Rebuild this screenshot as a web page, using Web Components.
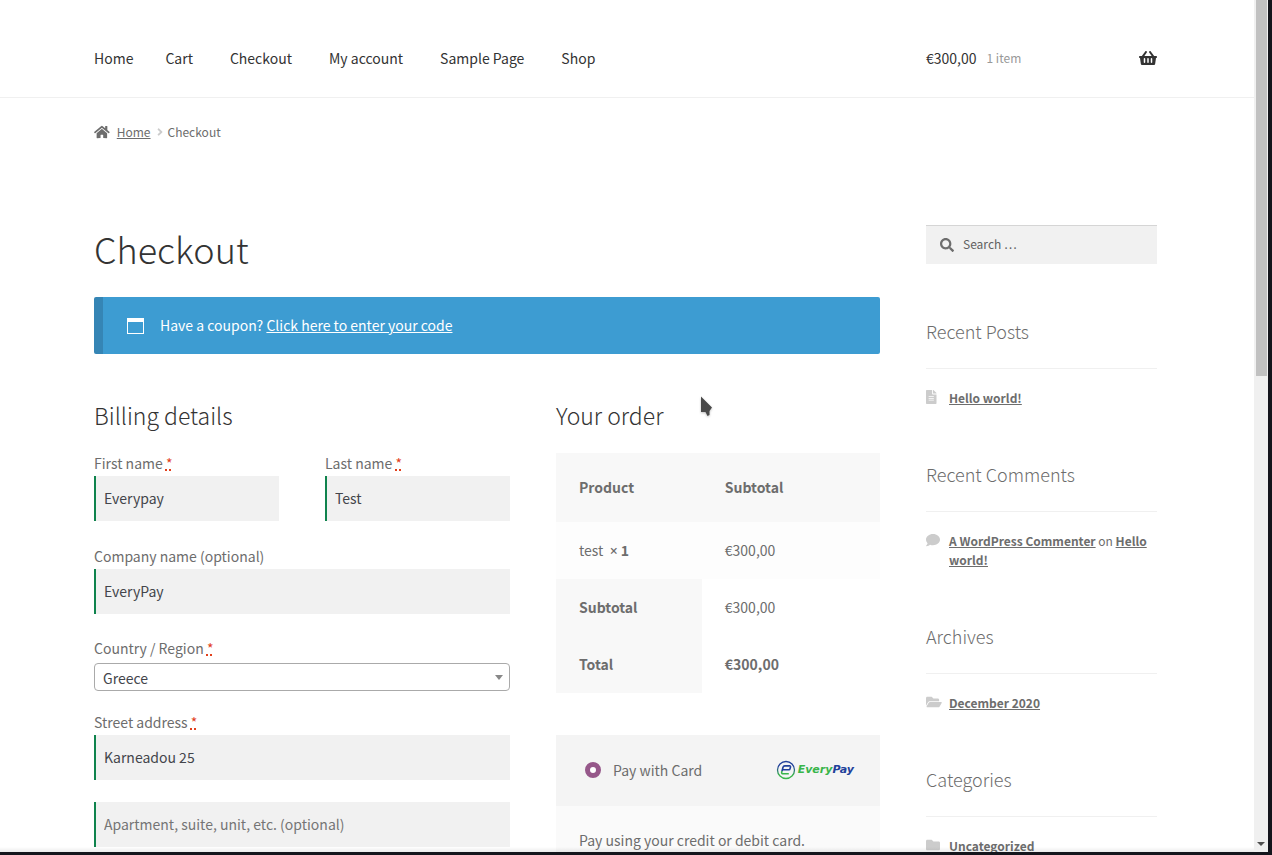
<!DOCTYPE html>
<html lang="en">
<head>
<meta charset="utf-8">
<title>Checkout</title>
<style>
    :root {
        --font: "Noto Sans CJK JP", "Noto Sans", sans-serif;
        --text: #6d6d6d;
        --heading: #333333;
        --line: #f0f0f0;
        --field: #f1f1f1;
        --size-1: 12px;
        --size-2: 14px;
        --size-3: 18px;
        --size-4: 23px;
        --size-5: 36px;
    }

    body {
        margin: 0;
        background: #ffffff;
        color: var(--text);
        font-family: var(--font);
        font-size: var(--size-2);
        line-height: 24px;
    }
</style>
</head>
<body>
<checkout-page></checkout-page>

<script>
const ICONS = {
    home: ['0 0 576 512', 'M280.37 148.26L96 300.11V464a16 16 0 0 0 16 16l112.06-.29a16 16 0 0 0 15.92-16V368a16 16 0 0 1 16-16h64a16 16 0 0 1 16 16v95.64a16 16 0 0 0 16 16.05L464 480a16 16 0 0 0 16-16V300L295.67 148.26a12.19 12.19 0 0 0-15.3 0zM571.6 251.47L488 182.56V44.05a12 12 0 0 0-12-12h-56a12 12 0 0 0-12 12v72.61L318.47 43a48 48 0 0 0-61 0L4.34 251.47a12 12 0 0 0-1.6 16.9l25.5 31A12 12 0 0 0 45.15 301l235.22-193.74a12.19 12.19 0 0 1 15.3 0L530.9 301a12 12 0 0 0 16.9-1.6l25.5-31a12 12 0 0 0-1.7-16.93z'],
    angle: ['0 0 256 512', 'M224.3 273l-136 136c-9.4 9.4-24.6 9.4-33.9 0l-22.6-22.6c-9.4-9.4-9.4-24.6 0-33.9l96.4-96.4-96.4-96.4c-9.4-9.4-9.4-24.6 0-33.9L54.3 103c9.4-9.4 24.6-9.4 33.9 0l136 136c9.5 9.4 9.5 24.6.1 34z'],
    search: ['0 0 512 512', 'M505 442.7L405.3 343c-4.5-4.5-10.6-7-17-7H372c27.6-35.3 44-79.7 44-128C416 93.1 322.9 0 208 0S0 93.1 0 208s93.1 208 208 208c48.3 0 92.7-16.4 128-44v16.3c0 6.4 2.5 12.5 7 17l99.7 99.7c9.4 9.4 24.6 9.4 33.9 0l28.3-28.3c9.4-9.4 9.4-24.6.1-34zM208 336c-70.7 0-128-57.2-128-128 0-70.7 57.2-128 128-128 70.7 0 128 57.2 128 128 0 70.7-57.2 128-128 128z'],
    basket: ['0 0 576 512', 'M576 216v16c0 13.255-10.745 24-24 24h-8l-26.113 182.788C514.509 462.435 494.257 480 470.37 480H105.63c-23.887 0-44.139-17.565-47.518-41.212L32 256h-8c-13.255 0-24-10.745-24-24v-16c0-13.255 10.745-24 24-24h67.341l106.78-146.821c10.395-14.292 30.407-17.453 44.701-7.058 14.293 10.395 17.453 30.408 7.058 44.701L170.477 192h235.046L326.12 82.821c-10.395-14.292-7.234-34.306 7.059-44.701 14.291-10.395 34.306-7.235 44.701 7.058L484.659 192H552c13.255 0 24 10.745 24 24zM312 392V280c0-13.255-10.745-24-24-24s-24 10.745-24 24v112c0 13.255 10.745 24 24 24s24-10.745 24-24zm112 0V280c0-13.255-10.745-24-24-24s-24 10.745-24 24v112c0 13.255 10.745 24 24 24s24-10.745 24-24zm-224 0V280c0-13.255-10.745-24-24-24s-24 10.745-24 24v112c0 13.255 10.745 24 24 24s24-10.745 24-24z'],
    file: ['0 0 384 512', 'M224 136V0H24C10.7 0 0 10.7 0 24v464c0 13.3 10.7 24 24 24h336c13.3 0 24-10.7 24-24V160H248c-13.2 0-24-10.8-24-24zm64 236c0 6.6-5.4 12-12 12H108c-6.6 0-12-5.4-12-12v-8c0-6.6 5.4-12 12-12h168c6.6 0 12 5.4 12 12v8zm0-64c0 6.6-5.4 12-12 12H108c-6.6 0-12-5.4-12-12v-8c0-6.6 5.4-12 12-12h168c6.6 0 12 5.4 12 12v8zm0-72v8c0 6.6-5.4 12-12 12H108c-6.6 0-12-5.4-12-12v-8c0-6.6 5.4-12 12-12h168c6.6 0 12 5.4 12 12zm96-114.1v6.1H256V0h6.1c6.4 0 12.5 2.5 17 7l97.9 98c4.5 4.5 7 10.6 7 16.9z'],
    comment: ['0 0 512 512', 'M256 32C114.6 32 0 125.1 0 240c0 49.6 21.4 95 57 130.7C44.5 421.1 2.7 466 2.2 466.5c-2.2 2.3-2.8 5.7-1.5 8.7S4.8 480 8 480c66.3 0 116-31.8 140.6-51.4 32.7 12.3 69 19.4 107.4 19.4 141.4 0 256-93.1 256-208S397.4 32 256 32z'],
    folder: ['0 0 512 512', 'M464 128H272l-64-64H48C21.49 64 0 85.49 0 112v288c0 26.51 21.49 48 48 48h416c26.51 0 48-21.49 48-48V176c0-26.51-21.49-48-48-48z'],
    open: ['0 0 576 512', 'M572.694 292.093L500.27 416.248A63.997 63.997 0 0 1 444.989 448H45.025c-18.523 0-30.064-20.093-20.731-36.093l72.424-124.155A64 64 0 0 1 152 256h399.964c18.523 0 30.064 20.093 20.73 36.093zM152 224h328v-48c0-26.51-21.49-48-48-48H272l-64-64H48C21.49 64 0 85.49 0 112v278.046l69.077-118.418C86.214 242.25 117.989 224 152 224z'],
    window: ['0 0 17 16', 'M0 0H17V16H0ZM1 4V15H16V4Z']
};

class BaseElement extends HTMLElement {
    constructor() {
        super();
        this.attachShadow({mode: 'open'});
    }

    connectedCallback() {
        this.shadowRoot.innerHTML = `<style>*, *::before, *::after { box-sizing: border-box; }${this.css()}</style>${this.html()}`;
    }
}

class ShopIcon extends BaseElement {
    html() {
        const [box, path] = ICONS[this.getAttribute('name')];
        return `<svg viewBox="${box}" aria-hidden="true"><path fill-rule="evenodd" d="${path}"/></svg>`;
    }

    css() {
        return `
            :host { display: inline-flex; height: 14px; }
            svg { display: block; height: 100%; fill: currentColor; }
        `;
    }
}

class SiteHeader extends BaseElement {
    html() {
        return `
            <nav>
                <a href="#home">Home</a>
                <a href="#cart">Cart</a>
                <a href="#checkout">Checkout</a>
                <a href="#account">My account</a>
                <a href="#sample">Sample Page</a>
                <a href="#shop">Shop</a>
            </nav>
            <a class="cart" href="#cart">
                <span>€300,00</span>
                <small>1 item</small>
                <shop-icon name="basket"></shop-icon>
            </a>
        `;
    }

    css() {
        return `
            :host {
                display: grid;
                grid-template-columns: minmax(0, 1fr) 231px;
                column-gap: 46px;
                align-items: center;
                padding: 46px 97px 27px 94px;
                border-bottom: 1px solid var(--line);
            }
            nav { display: flex; gap: 37px; }
            a { color: var(--heading); text-decoration: none; white-space: nowrap; }
            nav > a:first-child { margin-right: -5px; }
            .cart { display: flex; align-items: center; gap: 10px; }
            small { color: #999999; font-size: var(--size-1); }
            shop-icon { height: 16px; margin-left: auto; }
        `;
    }
}

class BreadCrumb extends BaseElement {
    html() {
        return `
            <shop-icon name="home"></shop-icon>
            <a href="#home">Home</a>
            <shop-icon class="sep" name="angle"></shop-icon>
            <span>Checkout</span>
        `;
    }

    css() {
        return `
            :host { display: flex; align-items: center; font-size: var(--size-1); }
            a { color: inherit; margin: 0 6px 0 7px; text-underline-offset: 1px; }
            .sep { color: #cccccc; height: 12px; margin-right: 5px; }
        `;
    }
}

class CouponNotice extends BaseElement {
    html() {
        return `
            <shop-icon name="window"></shop-icon>
            <span><slot></slot> <a href="#coupon">Click here to enter your code</a></span>
        `;
    }

    css() {
        return `
            :host {
                display: flex;
                align-items: center;
                gap: 16px;
                padding: 16px 24px;
                border-left: 9px solid #3585b5;
                border-radius: 2px;
                background: #3d9cd2;
                color: #ffffff;
                line-height: 25px;
            }
            shop-icon { height: 16px; }
            a { color: inherit; text-underline-offset: 1px; }
        `;
    }
}

class FormField extends BaseElement {
    html() {
        const label = this.getAttribute('label');
        const value = this.getAttribute('value') || '';
        const hint = this.getAttribute('placeholder') || '';
        const star = this.hasAttribute('required') ? ' <abbr title="required">*</abbr>' : '';
        const head = label ? `<label for="field">${label}${star}</label>` : '';
        if (this.hasAttribute('select')) {
            return `${head}<span class="pick"><select id="field"><option>${value}</option></select></span>`;
        }
        return `${head}<input id="field" type="text" value="${value}" placeholder="${hint}"${label ? '' : ` aria-label="${hint}"`}>`;
    }

    css() {
        return `
            :host { display: block; min-width: 0; }
            label { display: block; line-height: 22px; padding-bottom: 2px; }
            abbr {
                color: #e2401c;
                text-decoration: underline dotted;
                text-decoration-thickness: 2px;
                text-underline-offset: 0;
            }
            input, select {
                display: block;
                width: 100%;
                margin: 0;
                font: inherit;
                color: #43454b;
            }
            input {
                height: 45px;
                padding: 0 8px 2px;
                border: 0;
                border-left: 2px solid #0f834d;
                border-radius: 0;
                background: var(--field);
            }
            input::placeholder { color: #757575; opacity: 1; }
            .pick { display: block; position: relative; margin-top: 2px; }
            select {
                height: 28px;
                padding: 2px 24px 0 8px;
                border: 1px solid #aaaaaa;
                border-radius: 4px;
                background: #ffffff;
                appearance: none;
            }
            .pick::after {
                content: '';
                position: absolute;
                top: 12px;
                right: 7px;
                border: 4px solid transparent;
                border-top: 5px solid #888888;
                border-bottom: 0;
            }
        `;
    }
}

class BillingForm extends BaseElement {
    html() {
        return `
            <h3>Billing details</h3>
            <form>
                <div class="names">
                    <form-field label="First name" value="Everypay" required></form-field>
                    <form-field label="Last name" value="Test" required></form-field>
                </div>
                <form-field label="Company name (optional)" value="EveryPay"></form-field>
                <form-field label="Country / Region" value="Greece" select required></form-field>
                <div class="street">
                    <form-field label="Street address" value="Karneadou 25" required></form-field>
                    <form-field placeholder="Apartment, suite, unit, etc. (optional)"></form-field>
                </div>
            </form>
        `;
    }

    css() {
        return `
            :host { display: block; min-width: 0; }
            h3 {
                margin: 0 0 22px;
                color: var(--heading);
                font-size: var(--size-4);
                font-weight: 300;
                line-height: 30px;
            }
            form { display: flex; flex-direction: column; gap: 23px; }
            .names { display: grid; grid-template-columns: 1fr 1fr; gap: 46px; padding-bottom: 1px; }
            .street { display: flex; flex-direction: column; gap: 22px; margin-top: -3px; }
        `;
    }
}

class OrderTable extends BaseElement {
    html() {
        return `
            <h3>Your order</h3>
            <table>
                <thead>
                    <tr><th>Product</th><th>Subtotal</th></tr>
                </thead>
                <tbody>
                    <tr><td>test&nbsp; <strong><span class="times">×</span> 1</strong></td><td>€300,00</td></tr>
                </tbody>
                <tfoot>
                    <tr><th>Subtotal</th><td>€300,00</td></tr>
                    <tr><th>Total</th><td><strong>€300,00</strong></td></tr>
                </tfoot>
            </table>
        `;
    }

    css() {
        return `
            :host { display: block; }
            h3 {
                margin: 0 0 23px;
                color: var(--heading);
                font-size: var(--size-4);
                font-weight: 300;
                line-height: 30px;
            }
            table { width: 100%; border-collapse: collapse; table-layout: fixed; }
            th, td { padding: 16px 23px 17px; text-align: left; vertical-align: top; }
            th:first-child { width: 45%; }
            th, strong { font-weight: 600; }
            thead th { padding: 22px 23px 23px; background: #f8f8f8; }
            tbody td { background: #fdfdfd; }
            tfoot th { background: #f8f8f8; }
            .times { font-family: "Open Sans", sans-serif; line-height: 1; }
        `;
    }
}

class EverypayLogo extends BaseElement {
    html() {
        return `
            <svg viewBox="0 0 20 20" aria-hidden="true">
                <defs>
                    <linearGradient id="ring" x1="0" y1="0" x2="0" y2="1">
                        <stop offset="0.3" stop-color="#21409a"/>
                        <stop offset="0.8" stop-color="#39b54a"/>
                    </linearGradient>
                </defs>
                <circle cx="10" cy="10" r="8.5" fill="none" stroke="url(#ring)" stroke-width="1.3"/>
                <path d="M6.2 9.8H13Q13.8 9.8 14 8.9L14.5 7Q14.7 5.9 13.6 5.9H8.8Q7.4 5.9 7 7.2L6 11.2" fill="none" stroke="#21409a" stroke-width="1.6"/>
                <path d="M5.9 11.2L5.7 12.2Q5.5 13.8 7 13.8H12.8" fill="none" stroke="#39b54a" stroke-width="1.6"/>
            </svg>
            <span>Every<b>Pay</b></span>
        `;
    }

    css() {
        return `
            :host { display: inline-flex; align-items: center; gap: 2px; }
            svg { width: 20px; height: 20px; }
            span {
                color: #39b54a;
                font: italic 700 11px/20px "DejaVu Sans", sans-serif;
            }
            b { color: #21409a; font-weight: inherit; }
        `;
    }
}

class PaymentBox extends BaseElement {
    html() {
        return `
            <div class="method">
                <input type="radio" id="card" name="payment" checked>
                <label for="card">Pay with Card</label>
                <everypay-logo></everypay-logo>
            </div>
            <p>Pay using your credit or debit card.</p>
        `;
    }

    css() {
        return `
            :host { display: block; background: #fafafa; }
            .method {
                display: flex;
                align-items: center;
                padding: 23px 26px 24px 29px;
                background: #f4f4f4;
            }
            input {
                width: 16px;
                height: 16px;
                margin: 0 12px 0 0;
                border: 5px solid #96588a;
                border-radius: 50%;
                background: #ffffff;
                appearance: none;
            }
            everypay-logo { margin-left: auto; }
            p { margin: 0; padding: 22px 23px 60px; }
        `;
    }
}

class SearchBox extends BaseElement {
    html() {
        return `
            <shop-icon name="search"></shop-icon>
            <input type="search" placeholder="Search …" aria-label="Search for:">
        `;
    }

    css() {
        return `
            :host {
                display: flex;
                align-items: center;
                box-sizing: border-box;
                height: 39px;
                padding-left: 14px;
                gap: 9px;
                border-top: 1px solid #d5d5d5;
                background: var(--field);
            }
            input {
                flex: 1;
                min-width: 0;
                padding: 0 0 2px;
                border: 0;
                background: none;
                color: inherit;
                font: inherit;
                font-size: var(--size-1);
            }
            input::placeholder { color: #616161; opacity: 1; }
        `;
    }
}

class SideWidget extends BaseElement {
    html() {
        return `
            <h2>${this.getAttribute('heading')}</h2>
            <div class="item">
                <shop-icon name="${this.getAttribute('icon')}"></shop-icon>
                <span><slot></slot></span>
            </div>
        `;
    }

    css() {
        return `
            :host { display: block; }
            h2 {
                margin: 0 0 19px;
                padding-bottom: 25px;
                border-bottom: 1px solid var(--line);
                font-size: var(--size-3);
                font-weight: 300;
                line-height: 24px;
            }
            .item {
                display: grid;
                grid-template-columns: 23px 1fr;
                font-size: var(--size-1);
                line-height: 19px;
            }
            shop-icon { color: #cccccc; margin-top: 2px; }
            ::slotted(a) { color: inherit; font-weight: 600; text-underline-offset: 1px; }
        `;
    }
}

class ScrollBar extends BaseElement {
    html() {
        return `<div class="thumb"></div><div class="arrow"></div>`;
    }

    css() {
        return `
            :host {
                display: flex;
                flex-direction: column;
                justify-content: space-between;
                align-items: center;
                padding-bottom: 6px;
                background: #f0f0f0;
            }
            .thumb { width: 11px; height: 44.4%; background: #c1c1c1; }
            .arrow { border: 4px solid transparent; border-top-color: #505050; border-bottom: 0; }
        `;
    }
}

class CheckoutPage extends BaseElement {
    html() {
        return `
            <div class="view">
                <site-header></site-header>
                <bread-crumb></bread-crumb>
                <div class="content">
                    <main>
                        <h1>Checkout</h1>
                        <coupon-notice>Have a coupon?</coupon-notice>
                        <div class="columns">
                            <billing-form></billing-form>
                            <div class="review">
                                <order-table></order-table>
                                <payment-box></payment-box>
                            </div>
                        </div>
                    </main>
                    <aside>
                        <search-box></search-box>
                        <side-widget heading="Recent Posts" icon="file"><a href="#post">Hello world!</a></side-widget>
                        <side-widget heading="Recent Comments" icon="comment"><a href="#author">A WordPress Commenter</a> on <a href="#post">Hello world!</a></side-widget>
                        <side-widget heading="Archives" icon="open"><a href="#archive">December 2020</a></side-widget>
                        <side-widget heading="Categories" icon="folder"><a href="#category">Uncategorized</a></side-widget>
                    </aside>
                </div>
            </div>
            <scroll-bar></scroll-bar>
            <svg class="pointer" viewBox="0 0 14 22" aria-hidden="true"><path d="M1 0.5V16H5.5L7.5 20L9.5 19V15L12 11.5Z"/></svg>
        `;
    }

    css() {
        return `
            :host {
                display: grid;
                grid-template-columns: minmax(0, 1fr) 14px;
                height: 100vh;
                box-sizing: border-box;
                border: solid #14151c;
                border-width: 0 4px 3px 0;
                overflow: hidden;
            }
            .view { position: relative; overflow: hidden; }
            .view::after {
                content: '';
                position: absolute;
                left: 0;
                right: 0;
                bottom: 0;
                height: 5px;
                background: linear-gradient(rgba(0, 0, 0, 0), rgba(0, 0, 0, 0.08));
            }
            bread-crumb { padding: 22px 97px 69px 94px; }
            .content {
                display: grid;
                grid-template-columns: minmax(0, 1fr) 231px;
                column-gap: 46px;
                padding: 12px 97px 0 94px;
            }
            h1 {
                margin: 0 0 26px;
                color: var(--heading);
                font-size: var(--size-5);
                font-weight: 300;
                line-height: 46px;
            }
            .columns {
                display: grid;
                grid-template-columns: 416fr 324fr;
                column-gap: 46px;
                margin-top: 46px;
            }
            .review { display: flex; flex-direction: column; gap: 42px; }
            aside { display: flex; flex-direction: column; gap: 55px; }
            .pointer {
                position: fixed;
                left: 700px;
                top: 396px;
                width: 14px;
                height: 22px;
                fill: #4a4a4a;
                filter: drop-shadow(0 1px 1px #00000040);
            }
        `;
    }
}

customElements.define('shop-icon', ShopIcon);
customElements.define('site-header', SiteHeader);
customElements.define('bread-crumb', BreadCrumb);
customElements.define('coupon-notice', CouponNotice);
customElements.define('form-field', FormField);
customElements.define('billing-form', BillingForm);
customElements.define('order-table', OrderTable);
customElements.define('everypay-logo', EverypayLogo);
customElements.define('payment-box', PaymentBox);
customElements.define('search-box', SearchBox);
customElements.define('side-widget', SideWidget);
customElements.define('scroll-bar', ScrollBar);
customElements.define('checkout-page', CheckoutPage);
</script>
</body>
</html>
